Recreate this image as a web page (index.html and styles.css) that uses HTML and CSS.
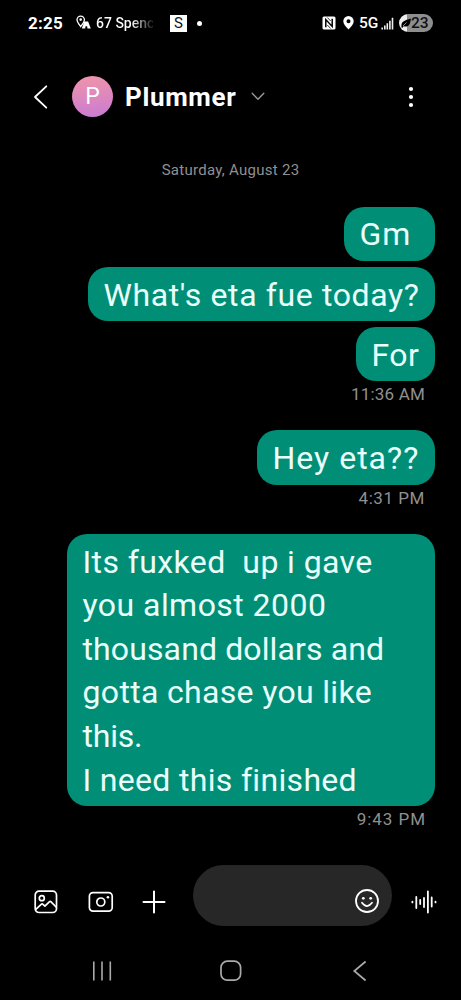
FILE: index.html
```
<!DOCTYPE html>
<html lang="en">
<head>
<meta charset="utf-8">
<title>Plummer</title>
<link rel="stylesheet" href="styles.css">
</head>
<body>
<div class="phone">
  <div class="status">
    <span class="clock">2:25</span>
    <svg class="trip" width="15" height="14" viewBox="0 0 15 14"><path d="M4.7 11.6C2.5 8.8 1 7 1 4.8a3.7 3.7 0 0 1 7.4 0C8.4 7 6.9 8.8 4.7 11.6Z" fill="none" stroke="#fff" stroke-width="1.3"/><circle cx="4.7" cy="4.6" r="1.3" fill="#fff"/><path d="M8.3 6.6h3.8L14.8 13.5h-3.3l-.4-2.2H9.5l-.3 2.2H5.8Z" fill="#fff"/></svg>
    <span class="notice">67 Spenc</span>
    <span class="sbox">S</span>
    <span class="dot"></span>
    <svg class="nfc" width="14" height="14" viewBox="0 0 14 14"><rect x=".5" y=".5" width="13" height="13" rx="1.5" fill="#fff"/><path d="M3.8 11.3V3.6l6.4 6.8V2.7" fill="none" stroke="#000" stroke-width="1.5"/><path d="M5.3 1.5l3.4 3.5M5.3 9l3.4 3.500" stroke="#000" stroke-width=".8"/></svg>
    <svg class="loc" width="11" height="14" viewBox="0 0 11 14"><path fill="#fff" fill-rule="evenodd" d="M5.5 13.5C2.5 10.3.3 8 .3 5.3a5.200 5.200 0 0 1 10.400 0C10.700 8 8.500 10.300 5.500 13.500ZM5.500 3.300a2 2 0 1 0 0 4 2 2 0 0 0 0-4Z"/></svg>
    <span class="net">5G</span>
    <svg class="signal" width="13" height="13" viewBox="0 0 13 13"><path d="M1.200 12.500v-2M3.800 12.500V8.500M6.300 12.500V6.300M8.900 12.500V3.800M11.500 12.500V.8" stroke="#eee" stroke-width="1.600"/></svg>
    <span class="battery"><svg width="10" height="10" viewBox="0 0 10 10"><path d="M.5 9.500C-.2 3.500 3 2.500 9.800.5 9.500 6 8 9.500 2.700 8.300L1.400 9.700Z"/><path d="M2 8l3.500-3.500" stroke="#eee" stroke-width=".6"/></svg><span>23</span></span>
  </div>

  <header class="header">
    <svg class="back" width="16" height="26" viewBox="0 0 16 26"><path d="M13.300 2.300 2 13l11.300 10.700" fill="none" stroke="#fff" stroke-width="1.800" stroke-linecap="round" stroke-linejoin="round"/></svg>
    <div class="avatar">P</div>
    <h1 class="name">Plummer</h1>
    <svg class="chev" width="14" height="9" viewBox="0 0 14 9"><path d="M1.200 1.300 7 7.200l5.800-5.900" fill="none" stroke="#999" stroke-width="1.400" stroke-linecap="round" stroke-linejoin="round"/></svg>
    <svg class="more" width="6" height="22" viewBox="0 0 6 22"><circle cx="3" cy="3" r="2.100" fill="#fff"/><circle cx="3" cy="11" r="2.100" fill="#fff"/><circle cx="3" cy="19" r="2.100" fill="#fff"/></svg>
  </header>

  <main class="thread">
    <div class="date">Saturday, August 23</div>
    <div class="bubble b-gm"><span class="l-gm">Gm </span></div>
    <div class="bubble b-what"><span class="l-what">What's eta fue today?</span></div>
    <div class="bubble b-for"><span class="l-for">For</span></div>
    <div class="time t1">11:36 AM</div>
    <div class="bubble b-hey"><span class="l-hey">Hey eta??</span></div>
    <div class="time t2">4:31 PM</div>
    <div class="bubble b-long"><span class="l-1">Its fuxked  up i gave</span>
<span class="l-2">you almost 2000</span>
<span class="l-3">thousand dollars and</span>
<span class="l-4">gotta chase you like</span>
<span class="l-5">this.</span>
<span class="l-6">I need this finished</span></div>
    <div class="time t3">9:43 PM</div>
  </main>

  <footer class="composer">
    <svg class="gallery" width="24" height="24" viewBox="0 0 24 24" fill="none" stroke="#fff" stroke-width="1.700" stroke-linecap="round" stroke-linejoin="round"><rect x="1.200" y="1.200" width="21.300" height="21.300" rx="3.800"/><circle cx="7.800" cy="8.200" r="2.500"/><path d="M1.800 19.400 7.200 14.300q.9-.8 1.800 0l1.900 1.800 4.400-4.300q.9-.8 1.800 0l5 5.200"/></svg>
    <svg class="camera" width="26" height="22" viewBox="0 0 26 22" fill="none" stroke="#fff" stroke-width="1.700"><rect x="1.400" y="1.600" width="22.800" height="18.600" rx="3.600"/><circle cx="12.800" cy="11" r="4"/><circle cx="19.900" cy="6.200" r="1.300" fill="#fff" stroke="none"/></svg>
    <svg class="plus" width="24" height="24" viewBox="0 0 24 24"><path d="M12 1.500v21M1.500 12h21" stroke="#fff" stroke-width="2" stroke-linecap="round"/></svg>
    <div class="field"><svg width="26" height="26" viewBox="0 0 26 26" fill="none" stroke="#fff" stroke-width="1.800" stroke-linecap="round"><circle cx="13" cy="13" r="11"/><path d="M8 14.800q5 6.600 10 0"/><circle cx="9.300" cy="10.300" r="1.400" fill="#fff" stroke="none"/><circle cx="16.700" cy="10.300" r="1.400" fill="#fff" stroke="none"/></svg></div>
    <svg class="wave" width="28" height="26" viewBox="0 0 28 26"><path d="M2.400 12.600v.8M6.300 8v11M10.200 11v4M14 9v9M17.900 2.500v21M21.700 8.500v9M25.500 12.600v.8" stroke="#fff" stroke-width="1.800" stroke-linecap="round"/></svg>
  </footer>

  <nav class="nav">
    <svg width="22" height="22" viewBox="0 0 22 22"><path d="M2.800 1.500v19M11 1.500v19M19.300 1.500v19" stroke="#aaa" stroke-width="1.600"/></svg>
    <svg width="24" height="22" viewBox="0 0 24 22"><rect x="2" y="1.200" width="19.600" height="19" rx="6.300" fill="none" stroke="#aaa" stroke-width="1.700"/></svg>
    <svg width="16" height="22" viewBox="0 0 16 22"><path d="M13.600 1.500 2.300 11l11.300 9.500" fill="none" stroke="#aaa" stroke-width="1.700"/></svg>
  </nav>
</div>
</body>
</html>
```
FILE: styles.css
```
* { box-sizing: border-box; }
body { margin: 0; background: #000; color: #fff; font-family: Roboto, "Liberation Sans", sans-serif; }
svg { display: block; flex: none; }
.phone { width: 461px; height: 1000px; display: flex; flex-direction: column; overflow: hidden; background: #000; }

.status { height: 46px; display: flex; align-items: center; flex: none; padding-left: 28px; white-space: nowrap; }
.clock { width: 34px; font-size: 17px; font-weight: 700; letter-spacing: .2px; }
.trip { margin-left: 14px; margin-top: -2px; }
.notice { width: 57px; margin-left: 5px; font-size: 14px; font-weight: 500; overflow: hidden; background: linear-gradient(90deg, #fff 62%, #222 98%); background-clip: text; -webkit-background-clip: text; color: transparent; }
.sbox { width: 17px; height: 17px; margin-left: 17px; background: #fff; color: #111; font-size: 15px; line-height: 17px; font-weight: 400; text-align: center; }
.dot { width: 5px; height: 5px; margin-left: 10px; border-radius: 50%; background: #fff; }
.nfc { margin-left: 120px; }
.loc { margin-left: 7px; }
.net { width: 19px; margin-left: 5px; font-size: 15.500px; font-weight: 500; }
.signal { margin-left: 3px; }
.battery { display: flex; align-items: center; width: 34px; height: 18px; margin-left: 5px; padding-left: 2px; gap: 0; border-radius: 9px; background: linear-gradient(90deg, #eee 8px, #8e8e8e 8px); color: #111; font-size: 15.500px; font-weight: 500; }

.header { height: 101px; display: flex; align-items: center; flex: none; padding-left: 32.500px; }
.avatar { width: 41px; height: 41px; margin-left: 23.500px; border-radius: 50%; background: linear-gradient(175deg, #f195a9, #c87bd2); font-size: 23px; line-height: 41px; text-align: center; }
.name { width: 112px; margin: 0 0 0 12px; font-size: 26px; font-weight: 700; line-height: 32px; letter-spacing: .650px; }
.chev { margin-left: 14px; }
.more { margin-left: 143px; }

.thread { flex: none; height: 718px; display: flex; flex-direction: column; align-items: flex-end; padding-right: 26px; }
.date { align-self: center; margin: 13px -26px 25.500px 0; height: 21px; font-size: 15px; line-height: 21px; letter-spacing: .270px; color: #909090; }
.bubble { height: 54.600px; margin-bottom: 5.600px; padding: 6.900px 0 4.100px 15.500px; border-radius: 20px; background: #008f76; color: #eafffb; font-size: 32px; line-height: 43.600px; white-space: pre; }
.b-gm { width: 91px; }
.b-what { width: 347px; }
.b-for { width: 79px; margin-bottom: 0; }
.b-hey { width: 178px; margin-bottom: 0; }
.b-long { width: 368px; height: 272.500px; margin-bottom: 0; }
.l-gm { letter-spacing: 1px; }
.l-what { letter-spacing: .620px; }
.l-for { letter-spacing: .400px; }
.l-hey { letter-spacing: 1px; }
.l-1 { letter-spacing: .400px; }
.l-2 { letter-spacing: .450px; }
.l-3 { letter-spacing: .120px; }
.l-4 { letter-spacing: .330px; }
.l-5 { letter-spacing: -.200px; }
.l-6 { letter-spacing: .320px; }
.time { height: 26px; margin-right: 10px; font-size: 17px; line-height: 26px; color: #909090; }
.t1, .t2 { margin-bottom: 22.800px; }
.t1 { letter-spacing: .200px; }
.t2 { letter-spacing: .550px; }
.t3 { letter-spacing: .950px; margin-right: 9px; }

.composer { display: flex; align-items: center; flex: none; height: 61px; padding-left: 34px; }
.composer > svg { margin-top: 12px; }
.camera { margin-left: 29.500px; }
.plus { margin-left: 28px; }
.field { width: 199px; height: 61px; margin-left: 27.500px; padding: 23px 0 0 161px; border-radius: 30.500px; background: #272727; }
.wave { margin-left: 18px; }

.nav { display: flex; flex: none; margin-top: 34px; padding-left: 91px; gap: 106px; }
.nav svg:last-child { margin-left: 3px; }
```
